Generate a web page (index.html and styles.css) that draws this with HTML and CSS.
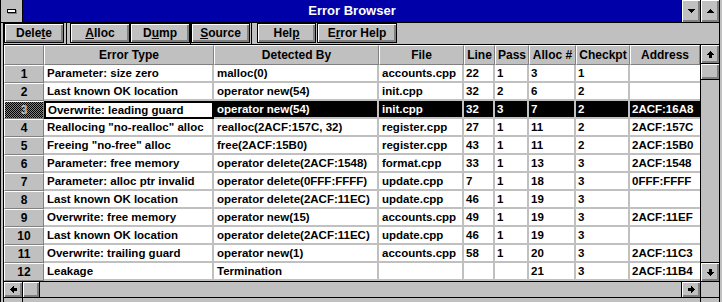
FILE: index.html
```html
<!DOCTYPE html>
<html>
<head>
<meta charset="utf-8">
<link rel="stylesheet" href="styles.css">
</head>
<body>
<div class="window">
  <div class="inner">
    <div class="titlebar">
      <div class="sysbox"><span class="sysdash"></span></div>
      <div class="caption">Error Browser</div>
      <div class="tbtn"><svg width="7" height="4" viewBox="0 0 7 4" shape-rendering="crispEdges"><rect x="0" y="0" width="7" height="1"/><rect x="1" y="1" width="5" height="1"/><rect x="2" y="2" width="3" height="1"/><rect x="3" y="3" width="1" height="1"/></svg></div>
      <div class="tbtn"><svg width="7" height="4" viewBox="0 0 7 4" shape-rendering="crispEdges"><rect x="3" y="0" width="1" height="1"/><rect x="2" y="1" width="3" height="1"/><rect x="1" y="2" width="5" height="1"/><rect x="0" y="3" width="7" height="1"/></svg></div>
    </div>
    <div class="frame">
      <div class="content">
        <div class="toolbar">
          <div class="btn b-delete">Dele<u>t</u>e</div>
          <div class="sep sep-a"></div>
          <div class="btn b-alloc"><u>A</u>lloc</div>
          <div class="btn b-dump">D<u>u</u>mp</div>
          <div class="sep sep-b"></div>
          <div class="btn b-source"><u>S</u>ource</div>
          <div class="sep sep-c"></div>
          <div class="btn b-help">Hel<u>p</u></div>
          <div class="btn b-ehelp">E<u>r</u>ror Help</div>
        </div>
        <div class="gridarea">
          <div class="grid">
            <div class="h"></div><div class="h">Error Type</div><div class="h">Detected By</div><div class="h">File</div><div class="h">Line</div><div class="h">Pass</div><div class="h">Alloc #</div><div class="h">Checkpt</div><div class="h">Address</div>

            <div class="rh">1</div><div class="c">Parameter: size zero</div><div class="c">malloc(0)</div><div class="c">accounts.cpp</div><div class="c n">22</div><div class="c n">1</div><div class="c n">3</div><div class="c n">1</div><div class="c n"></div>

            <div class="rh">2</div><div class="c">Last known OK location</div><div class="c">operator new(54)</div><div class="c">init.cpp</div><div class="c n">32</div><div class="c n">2</div><div class="c n">6</div><div class="c n">2</div><div class="c n"></div>

            <div class="rh rsel">3</div><div class="c focus">Overwrite: leading guard</div><div class="c s">operator new(54)</div><div class="c s">init.cpp</div><div class="c n s">32</div><div class="c n s">3</div><div class="c n s">7</div><div class="c n s">2</div><div class="c n s">2ACF:16A8</div>

            <div class="rh">4</div><div class="c">Reallocing "no-realloc" alloc</div><div class="c">realloc(2ACF:157C, 32)</div><div class="c">register.cpp</div><div class="c n">27</div><div class="c n">1</div><div class="c n">11</div><div class="c n">2</div><div class="c n">2ACF:157C</div>

            <div class="rh">5</div><div class="c">Freeing "no-free" alloc</div><div class="c">free(2ACF:15B0)</div><div class="c">register.cpp</div><div class="c n">43</div><div class="c n">1</div><div class="c n">11</div><div class="c n">2</div><div class="c n">2ACF:15B0</div>

            <div class="rh">6</div><div class="c">Parameter: free memory</div><div class="c">operator delete(2ACF:1548)</div><div class="c">format.cpp</div><div class="c n">33</div><div class="c n">1</div><div class="c n">13</div><div class="c n">3</div><div class="c n">2ACF:1548</div>

            <div class="rh">7</div><div class="c">Parameter: alloc ptr invalid</div><div class="c">operator delete(0FFF:FFFF)</div><div class="c">update.cpp</div><div class="c n">7</div><div class="c n">1</div><div class="c n">18</div><div class="c n">3</div><div class="c n">0FFF:FFFF</div>

            <div class="rh">8</div><div class="c">Last known OK location</div><div class="c">operator delete(2ACF:11EC)</div><div class="c">update.cpp</div><div class="c n">46</div><div class="c n">1</div><div class="c n">19</div><div class="c n">3</div><div class="c n"></div>

            <div class="rh">9</div><div class="c">Overwrite: free memory</div><div class="c">operator new(15)</div><div class="c">accounts.cpp</div><div class="c n">49</div><div class="c n">1</div><div class="c n">19</div><div class="c n">3</div><div class="c n">2ACF:11EF</div>

            <div class="rh">10</div><div class="c">Last known OK location</div><div class="c">operator delete(2ACF:11EC)</div><div class="c">update.cpp</div><div class="c n">46</div><div class="c n">1</div><div class="c n">19</div><div class="c n">3</div><div class="c n"></div>

            <div class="rh">11</div><div class="c">Overwrite: trailing guard</div><div class="c">operator new(1)</div><div class="c">accounts.cpp</div><div class="c n">58</div><div class="c n">1</div><div class="c n">20</div><div class="c n">3</div><div class="c n">2ACF:11C3</div>

            <div class="rh">12</div><div class="c">Leakage</div><div class="c">Termination</div><div class="c"></div><div class="c n"></div><div class="c n"></div><div class="c n">21</div><div class="c n">3</div><div class="c n">2ACF:11B4</div>
          </div>
          <div class="vscroll">
            <div class="sbtn sb-top"><svg width="7" height="7" viewBox="0 0 7 7" shape-rendering="crispEdges"><rect x="3" y="0" width="1" height="1"/><rect x="2" y="1" width="3" height="1"/><rect x="1" y="2" width="5" height="1"/><rect x="0" y="3" width="7" height="1"/><rect x="2" y="4" width="3" height="3"/></svg></div>
            <div class="thumb-v"></div>
            <div class="track"></div>
            <div class="sbtn sb-bottom"><svg width="7" height="7" viewBox="0 0 7 7" shape-rendering="crispEdges"><rect x="2" y="0" width="3" height="3"/><rect x="0" y="3" width="7" height="1"/><rect x="1" y="4" width="5" height="1"/><rect x="2" y="5" width="3" height="1"/><rect x="3" y="6" width="1" height="1"/></svg></div>
          </div>
        </div>
        <div class="hrow">
          <div class="hscroll">
            <div class="hbtn hb-left"><svg width="7" height="7" viewBox="0 0 7 7" shape-rendering="crispEdges"><rect x="0" y="3" width="1" height="1"/><rect x="1" y="2" width="1" height="3"/><rect x="2" y="1" width="1" height="5"/><rect x="3" y="0" width="1" height="7"/><rect x="4" y="2" width="3" height="3"/></svg></div>
            <div class="thumb-h"></div>
            <div class="htrack"></div>
            <div class="hbtn hb-right"><svg width="7" height="7" viewBox="0 0 7 7" shape-rendering="crispEdges"><rect x="0" y="2" width="3" height="3"/><rect x="3" y="0" width="1" height="7"/><rect x="4" y="1" width="1" height="5"/><rect x="5" y="2" width="1" height="3"/><rect x="6" y="3" width="1" height="1"/></svg></div>
          </div>
          <div class="corner"></div>
        </div>
        <div class="bottom">
          <div class="bseg1"></div>
          <div class="bseg2"></div>
          <div class="bseg3"></div>
        </div>
      </div>
    </div>
  </div>
</div>
</body>
</html>
```
FILE: styles.css
```css
* { box-sizing: border-box; }
body {
  margin: 0;
  background: #c0c0c0;
  font-family: "Liberation Sans", Arial, sans-serif;
  font-weight: bold;
  color: #000;
}
.window {
  width: 722px;
  height: 302px;
  padding-right: 2px;
  background: #c0c0c0;
  overflow: hidden;
}
.inner {
  height: 302px;
  border-right: 1px solid #000;
  display: flex;
  flex-direction: column;
}
.titlebar {
  display: flex;
  height: 23px;
  flex: none;
  border-bottom: 1px solid #000;
}
.sysbox {
  width: 23px;
  border-left: 1px solid #000;
  border-right: 1px solid #000;
  background: #c0c0c0;
  display: flex;
  align-items: center;
  justify-content: center;
}
.sysdash {
  width: 9px;
  height: 4px;
  background: #fff;
  border: 1px solid #000;
  box-shadow: 1px 1px 0 #808080;
}
.caption {
  flex: 1;
  background: #0000a8;
  color: #fff;
  font-size: 13px;
  line-height: 22px;
  text-align: center;
}
.tbtn {
  width: 19px;
  border-left: 1px solid #000;
  background: #c0c0c0;
  display: flex;
  align-items: center;
  justify-content: center;
  box-shadow: inset 1px 1px #fff, inset -1px -1px #808080, inset -2px -2px #808080;
}
.tbtn svg { fill: #000; margin-top: -1px; }
.frame {
  flex: 1;
  display: flex;
  flex-direction: column;
  border-left: 1px solid #000;
  padding-left: 2px;
}
.content {
  flex: 1;
  display: flex;
  flex-direction: column;
  border-left: 1px solid #000;
}
.toolbar {
  height: 22px;
  flex: none;
  display: flex;
  align-items: flex-start;
  border-bottom: 1px solid #000;
}
.btn {
  height: 20px;
  border: 1px solid #000;
  background: #c0c0c0;
  box-shadow: inset 1px 1px #fff, inset -1px -1px #808080, inset -2px -2px #808080;
  font-size: 12px;
  line-height: 18px;
  text-align: center;
  white-space: nowrap;
}
.btn u { text-underline-offset: 1px; }
.sep { width: 1px; height: 21px; background: #000; }
.b-delete { width: 60px; }
.sep-a { margin: 0 3px 0 2px; }
.b-alloc { width: 60px; }
.b-dump { width: 60px; }
.sep-b { margin: 0; }
.b-source { width: 59px; }
.sep-c { margin: 0 5px 0 1px; }
.b-help { width: 59px; }
.b-ehelp { width: 80px; margin-left: 1px; }
.gridarea {
  display: flex;
  height: 236px;
  flex: none;
}
.grid {
  width: 696px;
  display: grid;
  grid-template-columns: 40px 170px 165px 85px 31px 34px 47px 54px 70px;
  grid-template-rows: 20px;
  grid-auto-rows: 18px;
  background: #fff;
  overflow: hidden;
}
.h {
  background: #c0c0c0;
  border-top: 1px solid #fff;
  border-left: 1px solid #fff;
  border-right: 1px solid #808080;
  border-bottom: 1px solid #808080;
  font-size: 12px;
  line-height: 18px;
  text-align: center;
  white-space: nowrap;
  overflow: hidden;
}
.rh {
  background: #c0c0c0;
  border-top: 1px solid #fff;
  border-left: 1px solid #fff;
  border-right: 1px solid #808080;
  border-bottom: 1px solid #808080;
  font-size: 12px;
  line-height: 16px;
  text-align: center;
}
.rsel {
  background: repeating-conic-gradient(#000 0 25%, #808080 0 50%) 0 0 / 2px 2px;
  color: #c0c0c0;
}
.c {
  border-right: 2px solid #c0c0c0;
  border-bottom: 2px solid #c0c0c0;
  padding-left: 3px;
  font-size: 11.5px;
  line-height: 16px;
  white-space: nowrap;
  overflow: hidden;
}
.c.n { padding-left: 2px; }
.c:nth-child(9n) { border-right: none; }
.s { background: #000; color: #fff; }
.focus {
  border: 2px solid #000;
  padding-left: 2px;
  line-height: 14px;
}
.vscroll {
  width: 19px;
  border-left: 1px solid #000;
  display: flex;
  flex-direction: column;
  background: #c0c0c0;
}
.sbtn {
  height: 18px;
  flex: none;
  display: flex;
  align-items: center;
  justify-content: center;
  background: #c0c0c0;
  box-shadow: inset 1px 1px #fff, inset -1px -1px #808080, inset -2px -2px #808080;
}
.sbtn svg { fill: #000; }
.sb-top { border-bottom: 1px solid #000; height: 19px; }
.sb-bottom { border-top: 1px solid #000; height: 19px; }
.thumb-v {
  height: 16px;
  flex: none;
  border-bottom: 1px solid #000;
  background: #c0c0c0;
  box-shadow: inset 1px 1px #fff, inset -1px -1px #808080, inset -2px -2px #808080;
}
.track { flex: 1; background: #c0c0c0; }
.hrow {
  display: flex;
  height: 17px;
  flex: none;
  border-top: 1px solid #000;
  border-bottom: 1px solid #000;
}
.hscroll {
  width: 696px;
  display: flex;
}
.hbtn {
  width: 19px;
  flex: none;
  display: flex;
  align-items: center;
  justify-content: center;
  background: #c0c0c0;
  box-shadow: inset 1px 1px #fff, inset -1px -1px #808080, inset -2px -2px #808080;
}
.hbtn svg { fill: #000; }
.hb-left { border-right: 1px solid #000; }
.hb-right { border-left: 1px solid #000; }
.thumb-h {
  width: 17px;
  flex: none;
  border-right: 1px solid #000;
  background: #c0c0c0;
  box-shadow: inset 1px 1px #fff, inset -1px -1px #808080, inset -2px -2px #808080;
}
.htrack { flex: 1; background: #c0c0c0; }
.corner {
  width: 19px;
  border-left: 1px solid #000;
  background: #c0c0c0;
}
.bottom {
  flex: 1;
  display: flex;
}
.bseg1 { width: 19px; border-right: 1px solid #000; }
.bseg2 { flex: 1; }
.bseg3 { width: 19px; border-left: 1px solid #000; }
```
